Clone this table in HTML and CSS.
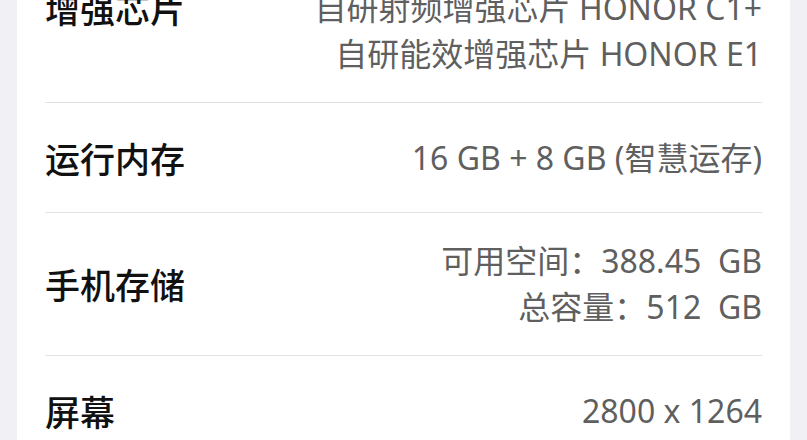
FILE: index.html
```html
<!DOCTYPE html>
<html lang="zh-CN">
<head>
<meta charset="utf-8">
<title>关于手机</title>
<link rel="stylesheet" href="styles.css">
</head>
<body>
<div class="page">
  <div class="card">
    <div class="row row-top">
      <div class="label">增强芯片</div>
      <div class="value">
        <div class="line">自研射频增强芯片 HONOR C1+</div>
        <div class="line">自研能效增强芯片 HONOR E1</div>
      </div>
    </div>
    <div class="row">
      <div class="label">运行内存</div>
      <div class="value">
        <div class="line">16 GB + 8 GB (智慧运存)</div>
      </div>
    </div>
    <div class="row">
      <div class="label">手机存储</div>
      <div class="value">
        <div class="line">可用空间：388.45&nbsp; GB</div>
        <div class="line">总容量：512&nbsp; GB</div>
      </div>
    </div>
    <div class="row">
      <div class="label">屏幕</div>
      <div class="value">
        <div class="line">2800 x 1264</div>
      </div>
    </div>
  </div>
</div>
</body>
</html>
```

FILE: styles.css
```css
html, body {
  margin: 0;
  padding: 0;
}
body {
  background: #f1f1f5;
  font-family: "Noto Sans", "Noto Sans CJK SC", sans-serif;
  overflow: hidden;
  height: 440px;
}
.page {
  padding: 0 17px;
}
.card {
  background: #ffffff;
  margin-top: -40px;
  padding: 0 28px 0 28px;
}
.row {
  display: flex;
  align-items: center;
  justify-content: space-between;
  min-height: 110px;
  padding: 25px 0;
  box-sizing: border-box;
  border-bottom: 1px solid #e2e2e4;
}
.row-top {
  align-items: flex-start;
}
.row:last-child {
  border-bottom: none;
}
.label {
  font-family: "Noto Sans CJK SC", sans-serif;
  font-size: 35px;
  font-weight: 500;
  color: #111111;
  line-height: 46px;
  white-space: nowrap;
}
.value {
  text-align: right;
  font-size: 32px;
  color: #5f5f5f;
  line-height: 46px;
}
.line {
  white-space: nowrap;
}
```
